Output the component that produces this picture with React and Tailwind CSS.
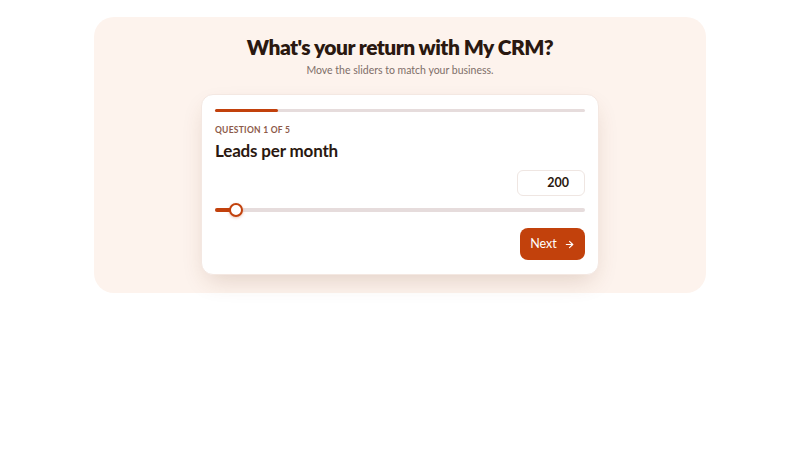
// ROI calculator intro step: header, question card with slider and next button.
import { useState } from "react";
import { ArrowRight } from "lucide-react";

const FONT = { fontFamily: "Lato, 'Noto Sans', sans-serif" };

function Slider({ value, min, max }) {
  const pct = ((value - min) / (max - min)) * 100;
  return (
    <div className="relative mt-[7px] h-[14px]">
      <div className="absolute inset-x-0 top-[5px] h-[4px] rounded-full bg-[#e6dcdc]" />
      <div className="absolute left-0 top-[5px] h-[4px] rounded-full bg-[#c2410c]" style={{ width: `${pct}%` }} />
      <div
        className="absolute top-0 h-[14px] w-[14px] -translate-x-1/2 rounded-full border-2 border-[#c2410c] bg-white shadow-[0_1px_3px_rgba(194,65,12,0.3)]"
        style={{ left: `${pct}%` }}
      />
    </div>
  );
}

export default function App() {
  const [leads] = useState(200);
  const step = 1;
  const steps = 5;

  return (
    <div className="min-h-screen bg-white" style={FONT}>
      <div className="mx-auto mt-[17px] w-[612px] rounded-[20px] bg-[#fdf3ed] px-4 pb-[18px] pt-4">
        <h1 className="text-center text-[21px] font-extrabold leading-[28px] tracking-[-0.025em] text-[#2a1810]">
          What's your return with My CRM?
        </h1>
        <p className="mt-[1px] text-center text-[10.5px] leading-4 text-[#7d6e68]">
          Move the sliders to match your business.
        </p>

        <div className="mx-auto mt-4 w-[398px] rounded-xl border border-[#f4e8e2] bg-white px-[13px] pb-[14px] pt-[14px] shadow-[0_10px_24px_-6px_rgba(110,60,30,0.2)]">
          <div className="h-[3px] rounded-full bg-[#e6dcdc]">
            <div className="h-full w-[17%] rounded-full bg-[#c2410c]" />
          </div>

          <p className="mt-[11px] text-[8.5px] font-bold uppercase leading-[14px] tracking-[0.03em] text-[#8c5a48]">
            Question {step} of {steps}
          </p>
          <h2 className="mt-[2px] text-[17px] font-bold leading-6 tracking-[-0.01em] text-[#2a1810]">Leads per month</h2>

          <div className="mt-[7px] flex justify-end">
            <div className="flex h-[26px] w-[68px] items-center justify-end rounded-md border border-[#efe6e2] bg-white px-[15px] text-[12.5px] font-bold text-[#2a1810]">
              {leads}
            </div>
          </div>

          <Slider value={leads} min={0} max={3500} />

          <div className="mt-[11px] flex justify-end">
            <button className="flex h-8 w-[65px] items-center justify-center gap-[7px] rounded-lg bg-[#c2410c] text-[12.5px] text-white">
              Next
              <ArrowRight size={11} strokeWidth={2.5} />
            </button>
          </div>
        </div>
      </div>
    </div>
  );
}
